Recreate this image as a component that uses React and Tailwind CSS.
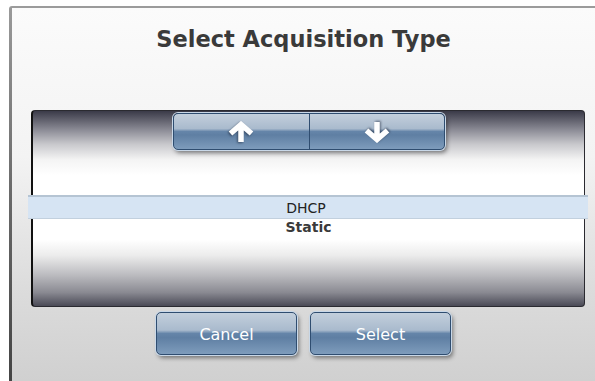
import React from "react";

const font = { fontFamily: '"DejaVu Sans", "Liberation Sans", sans-serif' };

const btnFace =
  "bg-[linear-gradient(to_bottom,#c3cfdc_0%,#a9bacd_42%,#6585a9_50%,#5f7fa3_60%,#7e9cbc_100%)] border border-[#2f4d70] shadow-[0_0_0_1px_#c9d8e8,2px_3px_4px_rgba(0,0,0,0.45)] rounded-[5px]";

const Arrow = ({ down }) => (
  <svg
    width="30"
    height="22"
    viewBox="0 0 30 22"
    className={down ? "rotate-180" : ""}
    style={{ filter: "drop-shadow(-1px 1px 1px rgba(30,40,60,0.6))" }}
  >
    <path
      d="M4.5 12.5 L15 3.5 L25.5 12.5 M15 4.5 L15 21"
      fill="none"
      stroke="#ffffff"
      strokeWidth="5.5"
      strokeLinejoin="miter"
    />
  </svg>
);

const ActionButton = ({ label }) => (
  <button
    className={`${btnFace} w-[141px] h-[43px] flex items-center justify-center pt-[3px] text-white text-[16px]`}
    style={font}
  >
    {label}
  </button>
);

export default function App() {
  return (
    <div className="w-[595px] h-[381px] bg-white overflow-hidden pt-[6px] pl-[9px]" style={font}>
      <div className="flex h-[375px]">
        {/* left frame edge */}
        <div className="w-[3px] rounded-tl-[3px] bg-[linear-gradient(to_bottom,#9a9a9a,#6a6a6a_50%,#444444)]" />
        <div className="flex-1 flex flex-col border-t-[2px] border-[#9b9b9b] bg-[linear-gradient(to_bottom,#fbfbfb_0%,#f3f3f3_40%,#dcdcdc_75%,#d0d0d0_100%)]">
          <div className="h-[64px] flex items-center justify-center">
            <h1 className="text-[22.5px] font-bold text-[#3a3a3a]">Select Acquisition Type</h1>
          </div>

          {/* picker */}
          <div className="mt-[38px] ml-[19px] w-[554px] h-[197px] flex flex-col rounded-[4px] border border-[#2a2a30] border-l-[2px] border-l-[#111] bg-[linear-gradient(to_bottom,#3a3a48_0%,#8e8e98_10%,#c8c8cc_17%,#f4f4f4_25%,#ffffff_33%,#ffffff_66%,#ececec_74%,#bcbcc0_84%,#8a8a92_93%,#4a4a56_100%)]">
            <div className={`${btnFace} mt-[2px] ml-[140px] w-[272px] h-[37px] flex`}>
              <div className="flex-1 flex items-center justify-center border-r border-[#2f4d70]">
                <Arrow />
              </div>
              <div className="flex-1 flex items-center justify-center">
                <Arrow down />
              </div>
            </div>

            <div className="mt-[45px] -ml-[5px] -mr-[4px] h-[24px] flex items-center justify-center pr-[4px] pt-[2px] bg-[#d6e4f3] border-t-[2px] border-b border-t-[#b5c4d3] border-b-[#c2d0de] text-[14px] text-[#222]">
              DHCP
            </div>
            <div className="h-[17px] flex items-center justify-center text-[14px] font-bold text-[#3a3a3a]">
              Static
            </div>
          </div>

          {/* actions */}
          <div className="mt-[5px] flex justify-center gap-[13px]">
            <ActionButton label="Cancel" />
            <ActionButton label="Select" />
          </div>
        </div>
      </div>
    </div>
  );
}
